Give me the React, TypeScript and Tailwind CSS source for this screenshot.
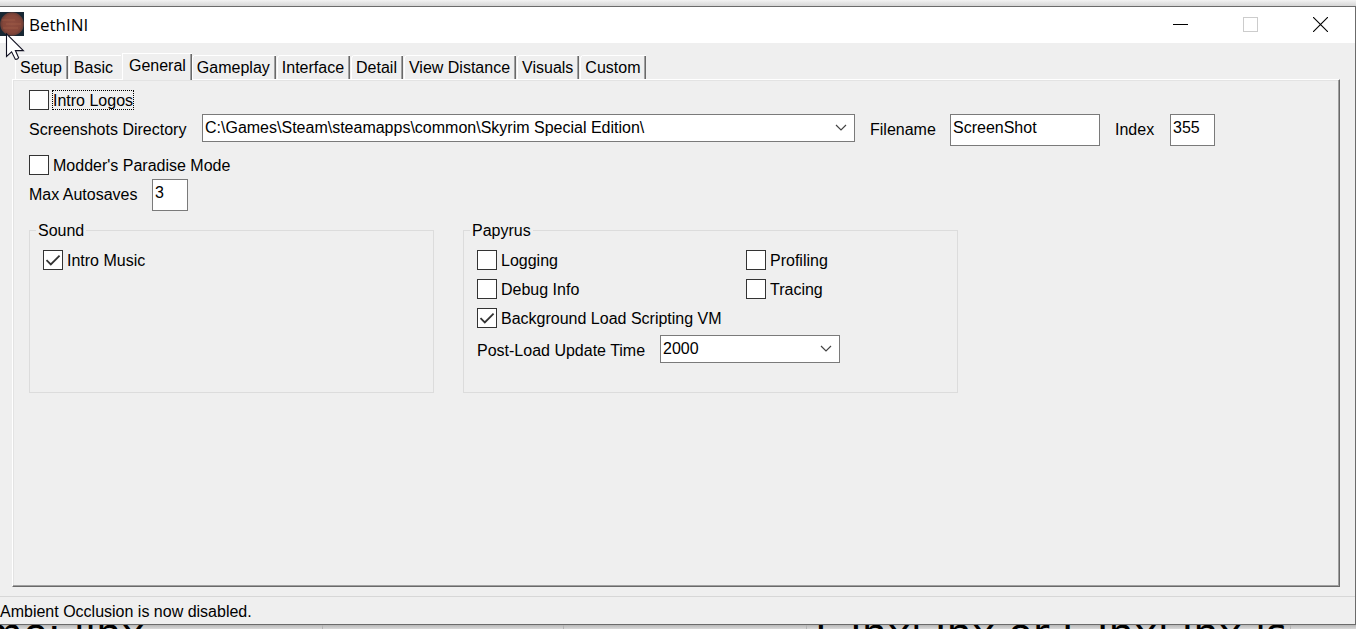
import { useState } from "react";
import type { ReactNode } from "react";

const tabs = ["Setup", "Basic", "General", "Gameplay", "Interface", "Detail", "View Distance", "Visuals", "Custom"];

const activeTab =
  "relative z-10 -mr-px -mb-px flex h-[27px] border-t border-l border-white bg-[#efefef] pr-1.5 pl-1.5 leading-6 shadow-[inset_-1px_0_#696969,inset_-2px_0_#a0a0a0]";
const plainTab =
  "flex h-6 rounded-tl-sm border-t border-l border-white pr-1.5 pl-1 leading-[23px] shadow-[inset_-1px_0_#696969,inset_-2px_0_#a0a0a0]";
const coveredTab = "flex h-6 rounded-tl-sm border-t border-l border-white pr-2 pl-1 leading-[23px]";

function Check({ label, checked = false, focused = false }: { label: string; checked?: boolean; focused?: boolean }) {
  const [on, setOn] = useState(checked);
  return (
    <label className="flex h-5 w-fit items-center gap-[3px]">
      <span className="relative flex">
        <input
          type="checkbox"
          checked={on}
          onChange={(e) => setOn(e.target.checked)}
          className="size-5 appearance-none border border-[#333333] bg-white"
        />
        {on && (
          <svg viewBox="0 0 20 20" className="pointer-events-none absolute inset-0 size-5" fill="none" stroke="#333333" strokeWidth="1.8">
            <path d="M3.5 10.2 L7.8 14.4 L16.6 5.6" />
          </svg>
        )}
      </span>
      <span className={"h-5 border border-dotted pt-0.5 leading-4 " + (focused ? "border-black" : "border-transparent")}>{label}</span>
    </label>
  );
}

function Combo({ id, value, className }: { id: string; value: string; className: string }) {
  return (
    <div className={"relative flex " + className}>
      <select id={id} defaultValue={value} className="h-7 w-full appearance-none border border-[#7a7a7a] bg-white pr-7 pb-px pl-0.5 text-black">
        <option value={value}>{value}</option>
      </select>
      <svg viewBox="0 0 12 8" className="pointer-events-none absolute top-2.5 right-2 h-2 w-3" fill="none" stroke="#444444" strokeWidth="1.2">
        <path d="M1 1 L6 6 L11 1" />
      </svg>
    </div>
  );
}

function TextBox({ id, value, className }: { id: string; value: string; className: string }) {
  return (
    <input id={id} type="text" defaultValue={value} className={"h-8 border border-[#7a7a7a] bg-white pb-1 pl-0.5 " + className} />
  );
}

function Group({ title, className, children }: { title: string; className: string; children: ReactNode }) {
  return (
    <fieldset className={"h-[173px] border border-[#dcdcdc] px-[13px] " + className}>
      <legend className="-ml-[7px] px-0.5 pt-0.5 leading-[18px]">{title}</legend>
      {children}
    </fieldset>
  );
}

export default function App() {
  const [active, setActive] = useState("General");
  const activeIndex = tabs.indexOf(active);
  return (
    <div className="flex h-screen flex-col overflow-hidden bg-[#d2d2d2] font-['Liberation_Sans',Arial,sans-serif] text-base text-black">
      <div className="h-1.5 shrink-0 bg-linear-to-b from-[#f3f3f3] to-[#d6d6d6]" />
      <main className="relative flex min-h-0 flex-1 flex-col border-y border-r border-[#6b6b6b] bg-[#efefef]">
        <header className="flex h-9 shrink-0 items-center bg-white">
          <svg viewBox="0 0 24 24" className="mb-0.5 size-6">
            <defs>
              <radialGradient id="planet">
                <stop offset="0" stopColor="#8f4e40" />
                <stop offset="0.75" stopColor="#854639" />
                <stop offset="1" stopColor="#643b35" />
              </radialGradient>
            </defs>
            <rect width="24" height="24" fill="#182733" />
            <circle cx="12" cy="12" r="11.8" fill="url(#planet)" />
            <path d="M2 8 H15 M6 12 H21 M3 16 H18" stroke="#a7654c" strokeWidth="1.2" opacity="0.6" />
          </svg>
          <h1 className="flex-1 pl-[5px] font-['Open_Sans',sans-serif] text-[17px]">BethINI</h1>
          <button aria-label="Minimize" className="flex h-9 w-[70px] items-center justify-center pb-0.5">
            <svg viewBox="0 0 15 15" className="size-[15px]"><path d="M0 7.5 H15" stroke="#000000" /></svg>
          </button>
          <button aria-label="Maximize" disabled className="flex h-9 w-[70px] items-center justify-center pb-0.5">
            <svg viewBox="0 0 15 15" className="size-[15px]"><rect x="0.5" y="0.5" width="14" height="14" fill="none" stroke="#cccccc" /></svg>
          </button>
          <button aria-label="Close" className="flex h-9 w-[70px] items-center justify-center pb-0.5">
            <svg viewBox="0 0 15 15" className="size-[15px]"><path d="M0 0 L15 15 M15 0 L0 15" stroke="#000000" strokeWidth="1.1" /></svg>
          </button>
        </header>

        <div className="flex min-h-0 flex-1 flex-col pt-2.5 pr-[15px] pb-[9px] pl-3">
          <div role="tablist" className="flex h-[26px] shrink-0 items-end gap-px pl-[3px]">
            {tabs.map((tab, i) => (
              <button
                key={tab}
                role="tab"
                aria-selected={tab === active}
                onClick={() => setActive(tab)}
                className={i === activeIndex ? activeTab : i === activeIndex - 1 ? coveredTab : plainTab}
              >
                {tab}
              </button>
            ))}
          </div>

          <section className="min-h-0 flex-1 border-t border-r border-b border-l border-t-white border-r-[#696969] border-b-[#696969] border-l-white pt-2.5 pl-4 shadow-[inset_-1px_-1px_#a0a0a0,inset_1px_1px_#e3e3e3]">
            <Check label="Intro Logos" focused />
            <div className="mt-1 flex items-start pr-[124px]">
              <label htmlFor="dir" className="w-[173px] shrink-0 leading-8">Screenshots Directory</label>
              <Combo id="dir" value="C:\Games\Steam\steamapps\common\Skyrim Special Edition\" className="min-w-0 flex-1" />
              <label htmlFor="file" className="w-[95px] shrink-0 pl-[15px] leading-8">Filename</label>
              <TextBox id="file" value="ScreenShot" className="w-[150px]" />
              <label htmlFor="index" className="w-[70px] shrink-0 pl-[15px] leading-8">Index</label>
              <TextBox id="index" value="355" className="w-[45px]" />
            </div>
            <div className="mt-[9px]">
              <Check label="Modder's Paradise Mode" />
            </div>
            <div className="mt-1 flex">
              <label htmlFor="autosaves" className="w-[123px] leading-[31px]">Max Autosaves</label>
              <TextBox id="autosaves" value="3" className="w-9" />
            </div>
            <div className="mt-[9px] flex gap-[29px]">
              <Group title="Sound" className="w-[405px]">
                <div className="pt-[10px]">
                  <Check label="Intro Music" checked />
                </div>
              </Group>
              <Group title="Papyrus" className="w-[495px]">
                <div className="grid grid-cols-[269px_1fr] gap-y-[9px] pt-[10px]">
                  <Check label="Logging" />
                  <Check label="Profiling" />
                  <Check label="Debug Info" />
                  <Check label="Tracing" />
                  <div className="col-span-2">
                    <Check label="Background Load Scripting VM" checked />
                  </div>
                </div>
                <div className="mt-[7px] flex">
                  <label htmlFor="update" className="w-[183px] leading-[31px]">Post-Load Update Time</label>
                  <Combo id="update" value="2000" className="w-[180px]" />
                </div>
              </Group>
            </div>
          </section>
        </div>

        <footer className="h-7 shrink-0 border-t border-[#d7d7d7] pt-[3px] leading-6">Ambient Occlusion is now disabled.</footer>

        <svg viewBox="0 0 20 28" className="pointer-events-none absolute top-[26px] left-[5px] z-20 h-7 w-5">
          <path d="M1.5 0.8 V23.5 L6.6 18.8 L10.3 26.3 Q12.5 26.6 13.6 24.7 L10.4 17.6 H18.4 Z" fill="#ffffff" stroke="#111122" strokeWidth="1.1" />
        </svg>
      </main>
      <div className="flex h-1 shrink-0 overflow-hidden bg-linear-to-b from-[#b8b8b8] to-[#dadada] font-['DejaVu_Sans',sans-serif] text-[40px] leading-8">
        <div className="w-[323px] shrink-0 border-r border-[#b4b4b4]">
          <p className="-mt-2 -indent-4 whitespace-nowrap">me: jinx</p>
        </div>
        <div className="w-[241px] shrink-0 border-r border-[#b4b4b4]" />
        <div className="w-[243px] shrink-0 border-r border-[#b4b4b4]" />
        <div className="w-[484px] shrink-0 border-r border-[#b4b4b4] pl-2">
          <p className="-mt-2 whitespace-nowrap">L Inxl Inx or L Inxl Inx is</p>
        </div>
      </div>
    </div>
  );
}
